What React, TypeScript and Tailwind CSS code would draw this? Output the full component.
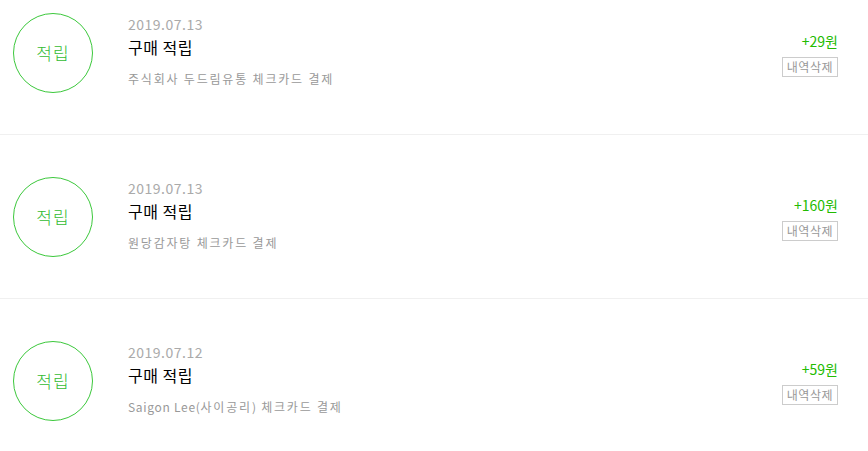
import React from 'react'

interface PointItem {
  date: string
  title: string
  desc: string
  amount: string
}

const items: PointItem[] = [
  { date: '2019.07.13', title: '구매 적립', desc: '주식회사 두드림유통 체크카드 결제', amount: '+29원' },
  { date: '2019.07.13', title: '구매 적립', desc: '원당감자탕 체크카드 결제', amount: '+160원' },
  { date: '2019.07.12', title: '구매 적립', desc: 'Saigon Lee(사이공리) 체크카드 결제', amount: '+59원' }
]

const font = { fontFamily: '"Noto Sans CJK KR", "Noto Sans", sans-serif' }

// latin runs get tighter spacing than hangul
const Desc = ({ text }: { text: string }) => (
  <>
    {text.split(/([A-Za-z()]+(?: [A-Za-z()]+)*)/).map((part, i) =>
      /[A-Za-z]/.test(part) || part === ')' ? (
        <span key={i} className="tracking-[0.7px]">{part}</span>
      ) : (
        <span key={i}>{part}</span>
      )
    )}
  </>
)

export default function App() {
  return (
    <div className="w-[868px] h-[451px] overflow-hidden bg-white" style={font}>
      <ul className="-mt-[29px]">
        {items.map((item, i) => (
          <li key={i} className="flex items-start pt-[42px] pb-[41px] border-b border-[#f0f0f0] last:border-b-0">
            {/* badge */}
            <div className="ml-[13px] w-[80px] h-[80px] shrink-0 rounded-full border border-[#3cc83c] flex items-center justify-center text-[17px] font-light tracking-[1px] text-[#33bb33]">
              적립
            </div>

            {/* details */}
            <div className="ml-[35px] mt-[3px] flex flex-col">
              <span className="text-[14px] leading-[16px] tracking-[0.5px] text-[#aaaaaa]">{item.date}</span>
              <span className="mt-[5px] text-[16px] leading-[20px] tracking-[0.5px] text-black">{item.title}</span>
              <span className="mt-[14px] text-[12px] leading-[16px] tracking-[1.8px] text-[#999999]">
                <Desc text={item.desc} />
              </span>
            </div>

            {/* amount */}
            <div className="ml-auto mr-[30px] mt-[19px] flex flex-col items-end">
              <span className="text-[14px] leading-[18px] text-[#22bb00]">{item.amount}</span>
              <button className="mt-[7px] h-[20px] px-[4px] border border-[#cccccc] text-[12px] leading-[18px] tracking-[0.5px] text-[#999999]">
                내역삭제
              </button>
            </div>
          </li>
        ))}
      </ul>
    </div>
  )
}
